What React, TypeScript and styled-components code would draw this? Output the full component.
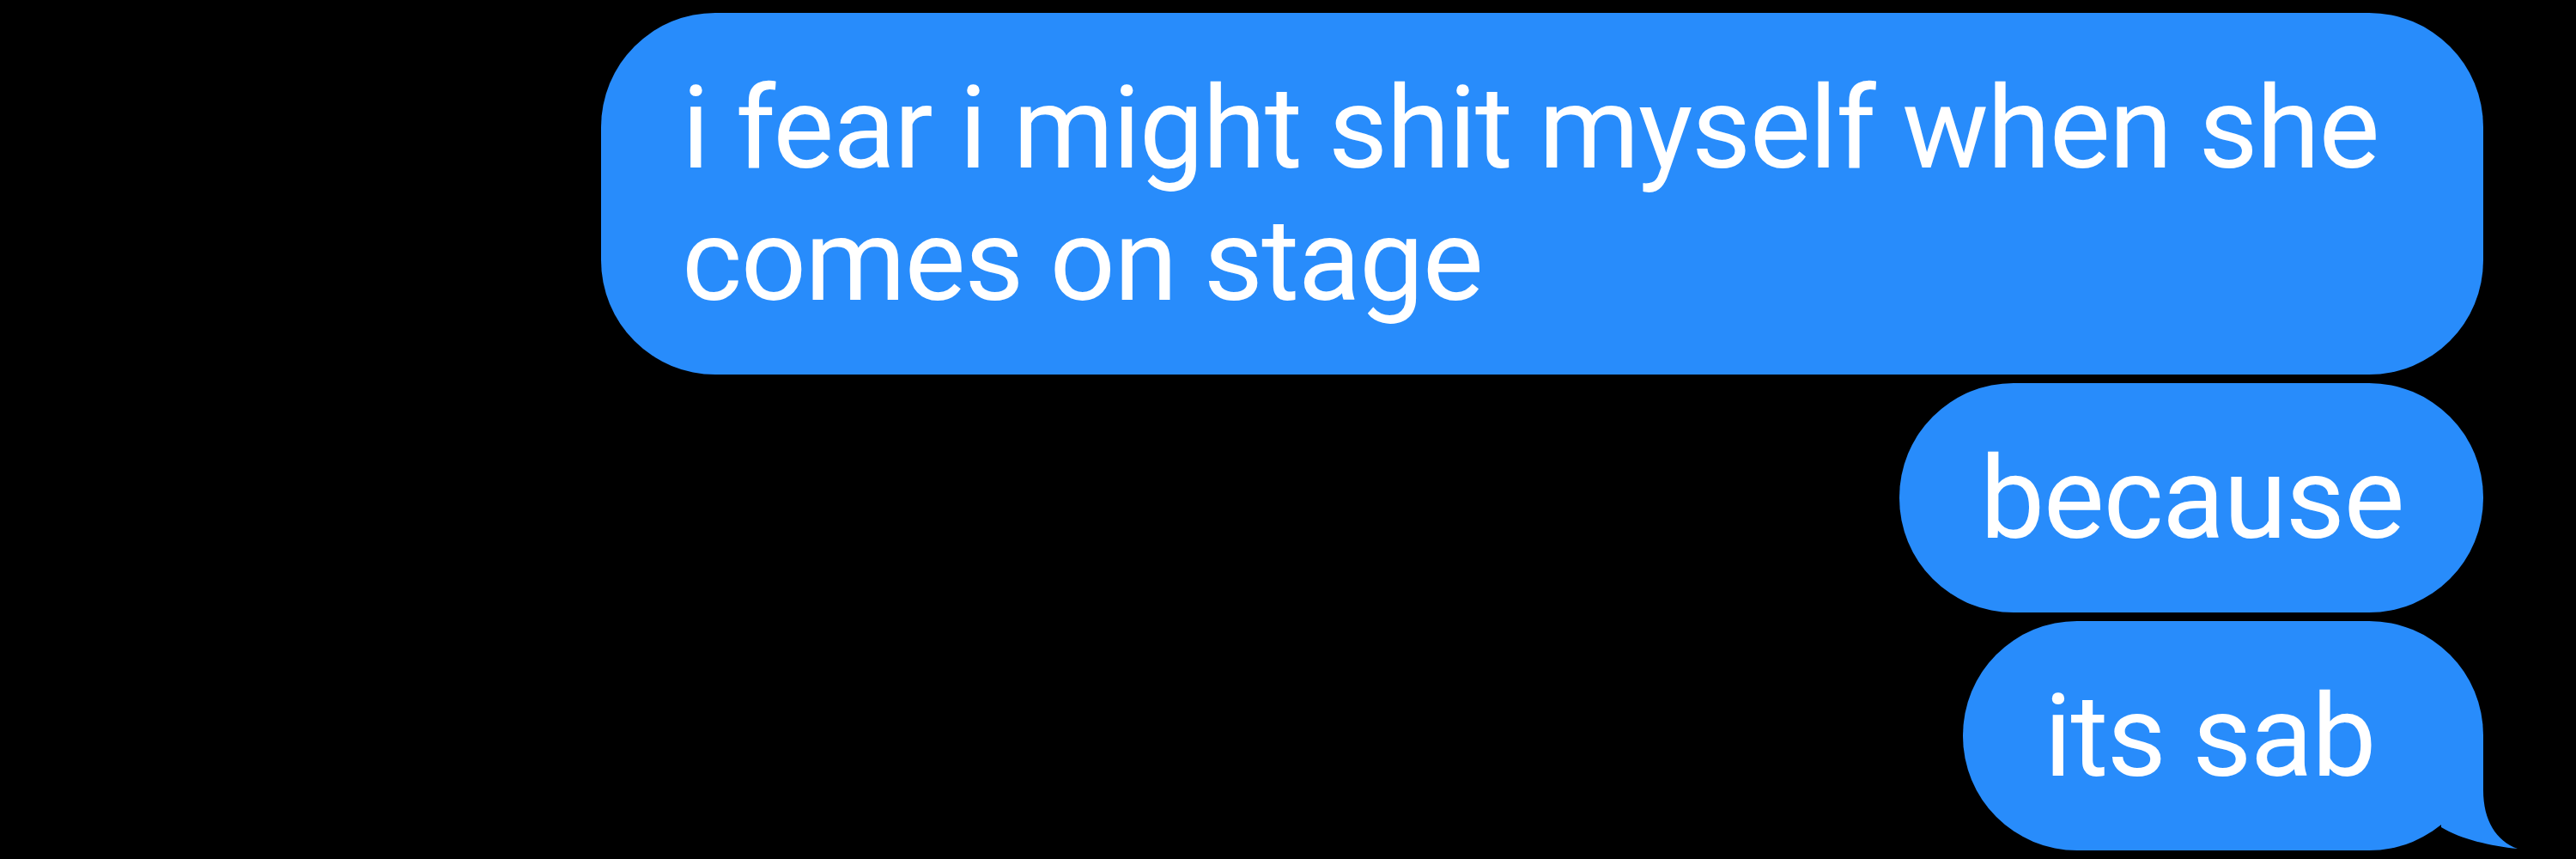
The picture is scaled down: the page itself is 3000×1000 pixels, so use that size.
import React from "react";
import styled, {createGlobalStyle} from "styled-components";

const GlobalStyle = createGlobalStyle`
    html, body {
        margin: 0;
        padding: 0;
        background: #000;
    }
    #root {
        min-height: 1000px;
    }
`

const messages = [
    {id: 1, text: "i fear i might shit myself when she comes on stage", tail: false},
    {id: 2, text: "because", tail: false},
    {id: 3, text: "its sab", tail: true},
];

export default function App() {
    return (
        <>
            <GlobalStyle/>
            <StyledThread>
                {messages.map((m) => (
                    <StyledBubble key={m.id} $tail={m.tail}>
                        {m.text}
                        {m.tail && (
                            <StyledTail viewBox="0 0 92 135" aria-hidden="true">
                                <path d="M2 0 L51 0 L51 65 C51 100, 66 124, 91 133 C60 130, 25 122, 2 108 Z"/>
                            </StyledTail>
                        )}
                    </StyledBubble>
                ))}
            </StyledThread>
        </>
    );
}

const StyledThread = styled.div`
    display: flex;
    flex-direction: column;
    align-items: flex-end;
    gap: 10px;
    padding: 15px 108px 0 0;
    background: #000;
    height: 1000px;
    box-sizing: border-box;
`

const StyledBubble = styled.div<{ $tail: boolean }>`
    position: relative;
    box-sizing: border-box;
    max-width: 2192px;
    padding: 58px ${({$tail}) => ($tail ? "126px" : "93px")} 55px 94px;
    border-radius: 133px;
    background: #288cfb;
    color: #fff;
    font-family: Roboto, "Liberation Sans", Arial, sans-serif;
    font-size: 134px;
    line-height: 154px;
    letter-spacing: -1.5px;
`

const StyledTail = styled.svg`
    position: absolute;
    right: -41px;
    bottom: 0;
    width: 92px;
    height: 135px;
    fill: #288cfb;
`
